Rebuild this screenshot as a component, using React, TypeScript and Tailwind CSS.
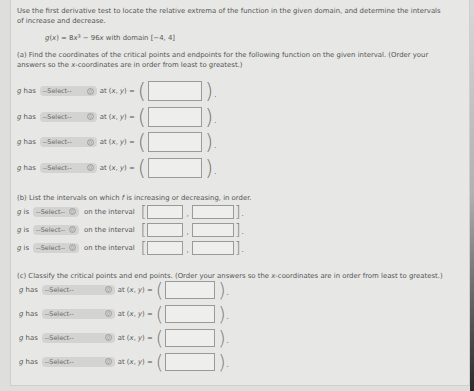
import React from "react";

function SelectBox({ w }: { w: string }) {
  return (
    <div className={`flex items-center justify-between whitespace-nowrap rounded-[4px] bg-[#d3d3d1] h-[10px] pl-[3px] pr-[3px] ${w}`}>
      <span className="text-[6.4px] text-[#6a6a6a]">--Select--</span>
      <svg width="7" height="7" viewBox="0 0 10 10" className="shrink-0">
        <circle cx="5" cy="5" r="4.2" fill="none" stroke="#888" strokeWidth="1" />
        <path d="M3.3 4.4 L5 2.8 L6.7 4.4 M3.3 5.6 L5 7.2 L6.7 5.6" fill="none" stroke="#888" strokeWidth="0.9" />
      </svg>
    </div>
  );
}

function Input({ w, h }: { w: string; h: string }) {
  return <div className={`border border-[#9a9a98] bg-[#eeeeec] ${w} ${h}`} />;
}

function PointRow({ selW, boxW, big, rowH, boxH }: { selW: string; boxW: string; big: string; rowH: string; boxH: string }) {
  return (
    <div className={`flex items-center whitespace-nowrap ${rowH}`}>
      <span>
        <i>g</i> has
      </span>
      <div className="ml-[4px]">
        <SelectBox w={selW} />
      </div>
      <span className="ml-[3px]">
        at (<i>x</i>, <i>y</i>) =
      </span>
      <span className={`ml-[3px] font-light text-[#777] ${big}`}>(</span>
      <div className="ml-[2px]">
        <Input w={boxW} h={boxH} />
      </div>
      <span className={`ml-[3px] font-light text-[#777] ${big}`}>)</span>
      <span className="ml-[1px] self-end leading-[12px]">.</span>
    </div>
  );
}

function IntervalRow() {
  return (
    <div className="flex items-center whitespace-nowrap h-[14px]">
      <span>
        <i>g</i> is
      </span>
      <div className="ml-[4px]">
        <SelectBox w="w-[46px]" />
      </div>
      <span className="ml-[5px]">on the interval</span>
      <span className="ml-[6px] text-[15px] font-light leading-[14px] text-[#777]">[</span>
      <div className="ml-[1px]">
        <Input w="w-[36px]" h="h-[14px]" />
      </div>
      <span className="mx-[3px] self-end leading-[10px]">,</span>
      <Input w="w-[42px]" h="h-[14px]" />
      <span className="ml-[1px] text-[15px] font-light leading-[14px] text-[#777]">]</span>
      <span className="ml-[1px] self-end leading-[10px]">.</span>
    </div>
  );
}

export default function App() {
  return (
    <div className="relative w-[474px] h-[391px] overflow-hidden bg-[#dededc]">
      <div className="flex h-full">
        <div className="w-[460px] h-[386px] bg-[#e7e7e5] border-r border-b border-l border-[#cfcfcd] ml-[10px] pl-[6px] pt-[6px] text-[6.9px] leading-[10px] text-[#555] font-['DejaVu_Sans',sans-serif]">
          <p className="whitespace-nowrap">
            Use the first derivative test to locate the relative extrema of the function in the given domain, and determine the intervals
            <br />
            of increase and decrease.
          </p>
          <p className="mt-[7px] pl-[28px]">
            <i>g</i>(<i>x</i>) = 8<i>x</i>
            <sup className="text-[5px]">3</sup> − 96<i>x</i> with domain [−4, 4]
          </p>
          <p className="mt-[7px] whitespace-nowrap">
            (a) Find the coordinates of the critical points and endpoints for the following function on the given interval. (Order your
            <br />
            answers so the <i>x</i>-coordinates are in order from least to greatest.)
          </p>
          <div className="mt-[11px] flex flex-col gap-[5.5px]">
            <PointRow selW="w-[57px]" boxW="w-[54px]" big="text-[21px] leading-[20px]" rowH="h-[20px]" boxH="h-[20px]" />
            <PointRow selW="w-[57px]" boxW="w-[54px]" big="text-[21px] leading-[20px]" rowH="h-[20px]" boxH="h-[20px]" />
            <PointRow selW="w-[57px]" boxW="w-[54px]" big="text-[21px] leading-[20px]" rowH="h-[20px]" boxH="h-[20px]" />
            <PointRow selW="w-[57px]" boxW="w-[54px]" big="text-[21px] leading-[20px]" rowH="h-[20px]" boxH="h-[20px]" />
          </div>
          <p className="mt-[15px] whitespace-nowrap">
            (b) List the intervals on which <i>f</i> is increasing or decreasing, in order.
          </p>
          <div className="mt-[2px] flex flex-col gap-[4px]">
            <IntervalRow />
            <IntervalRow />
            <IntervalRow />
          </div>
          <p className="mt-[16px] whitespace-nowrap">
            (c) Classify the critical points and end points. (Order your answers so the <i>x</i>-coordinates are in order from least to greatest.)
          </p>
          <div className="flex flex-col gap-[6px] pl-[2px]">
            <PointRow selW="w-[73px]" boxW="w-[50px]" big="text-[19px] leading-[18px]" rowH="h-[18px]" boxH="h-[18px]" />
            <PointRow selW="w-[73px]" boxW="w-[50px]" big="text-[19px] leading-[18px]" rowH="h-[18px]" boxH="h-[18px]" />
            <PointRow selW="w-[73px]" boxW="w-[50px]" big="text-[19px] leading-[18px]" rowH="h-[18px]" boxH="h-[18px]" />
            <PointRow selW="w-[73px]" boxW="w-[50px]" big="text-[19px] leading-[18px]" rowH="h-[18px]" boxH="h-[18px]" />
          </div>
        </div>
        <div className="flex-1 bg-gradient-to-b from-[#d8d8d6] via-[#b0b0ae] to-[#2a2a2a]" />
      </div>
    </div>
  );
}
